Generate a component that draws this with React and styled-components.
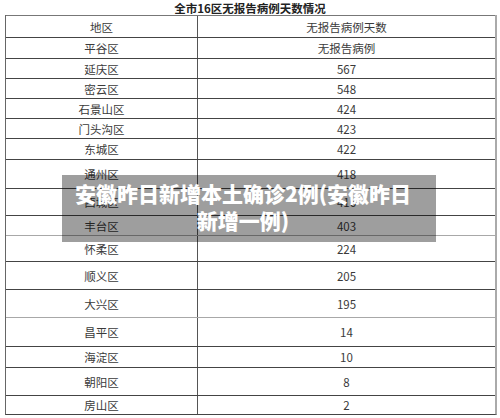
import React from 'react';
import styled, { createGlobalStyle } from 'styled-components';

const GlobalStyle = createGlobalStyle`
  html, body {
    margin: 0;
    padding: 0;
    background: #fff;
  }
  body {
    font-family: "Noto Sans CJK SC", "Noto Sans", sans-serif;
  }
`;

const Page = styled.div`
  position: relative;
  width: 500px;
  height: 418px;
  overflow: hidden;
  background: #fff;
`;

const Title = styled.div`
  height: 15px;
  padding-top: 1px;
  box-sizing: border-box;
  text-align: center;
  font-size: 11.5px;
  line-height: 14px;
  font-weight: 700;
  color: #222;
`;

const Table = styled.div`
  margin-left: 5px;
  width: 492px;
  box-sizing: border-box;
  border-left: 1px solid #666;
  border-right: 2px solid #aaa;
  border-bottom: 1px solid #444;
`;

const Row = styled.div`
  display: grid;
  grid-template-columns: 192px 1fr;
  height: ${(p) => p.$h}px;
  box-sizing: border-box;
  border-top: 1px solid ${(p) => (p.$light ? '#a8a8a8' : p.$first ? '#777' : '#444')};
`;

const Cell = styled.div`
  display: flex;
  align-items: center;
  justify-content: center;
  font-size: 11.5px;
  color: #3a3a3a;
  border-right: ${(p) => (p.$left ? '1px solid #555' : 'none')};
`;

const Banner = styled.div`
  position: absolute;
  left: 62px;
  top: 175px;
  width: 374px;
  height: 67px;
  box-sizing: border-box;
  padding: 5px 16px 0 4px;
  background: rgba(0, 0, 0, 0.38);
  color: #fff;
  font-size: 21px;
  line-height: 27px;
  font-weight: 900;
  text-align: center;
`;

const rows = [
  ['地区', '无报告病例天数', 22, false, true],
  ['平谷区', '无报告病例', 21],
  ['延庆区', '567', 20],
  ['密云区', '548', 20],
  ['石景山区', '424', 20],
  ['门头沟区', '423', 20],
  ['东城区', '422', 21],
  ['通州区', '418', 29],
  ['西城区', '416', 27],
  ['丰台区', '403', 20],
  ['怀柔区', '224', 26, true],
  ['顺义区', '205', 28],
  ['大兴区', '195', 28],
  ['昌平区', '14', 29, true],
  ['海淀区', '10', 21],
  ['朝阳区', '8', 28],
  ['房山区', '2', 19],
];

export default function App() {
  return (
    <Page>
      <GlobalStyle />
      <Title>全市16区无报告病例天数情况</Title>
      <Table>
        {rows.map(([area, days, h, light, first]) => (
          <Row key={area} $h={h} $light={light} $first={first}>
            <Cell $left>{area}</Cell>
            <Cell>{days}</Cell>
          </Row>
        ))}
      </Table>
      <Banner>安徽昨日新增本土确诊2例(安徽昨日新增一例)</Banner>
    </Page>
  );
}
